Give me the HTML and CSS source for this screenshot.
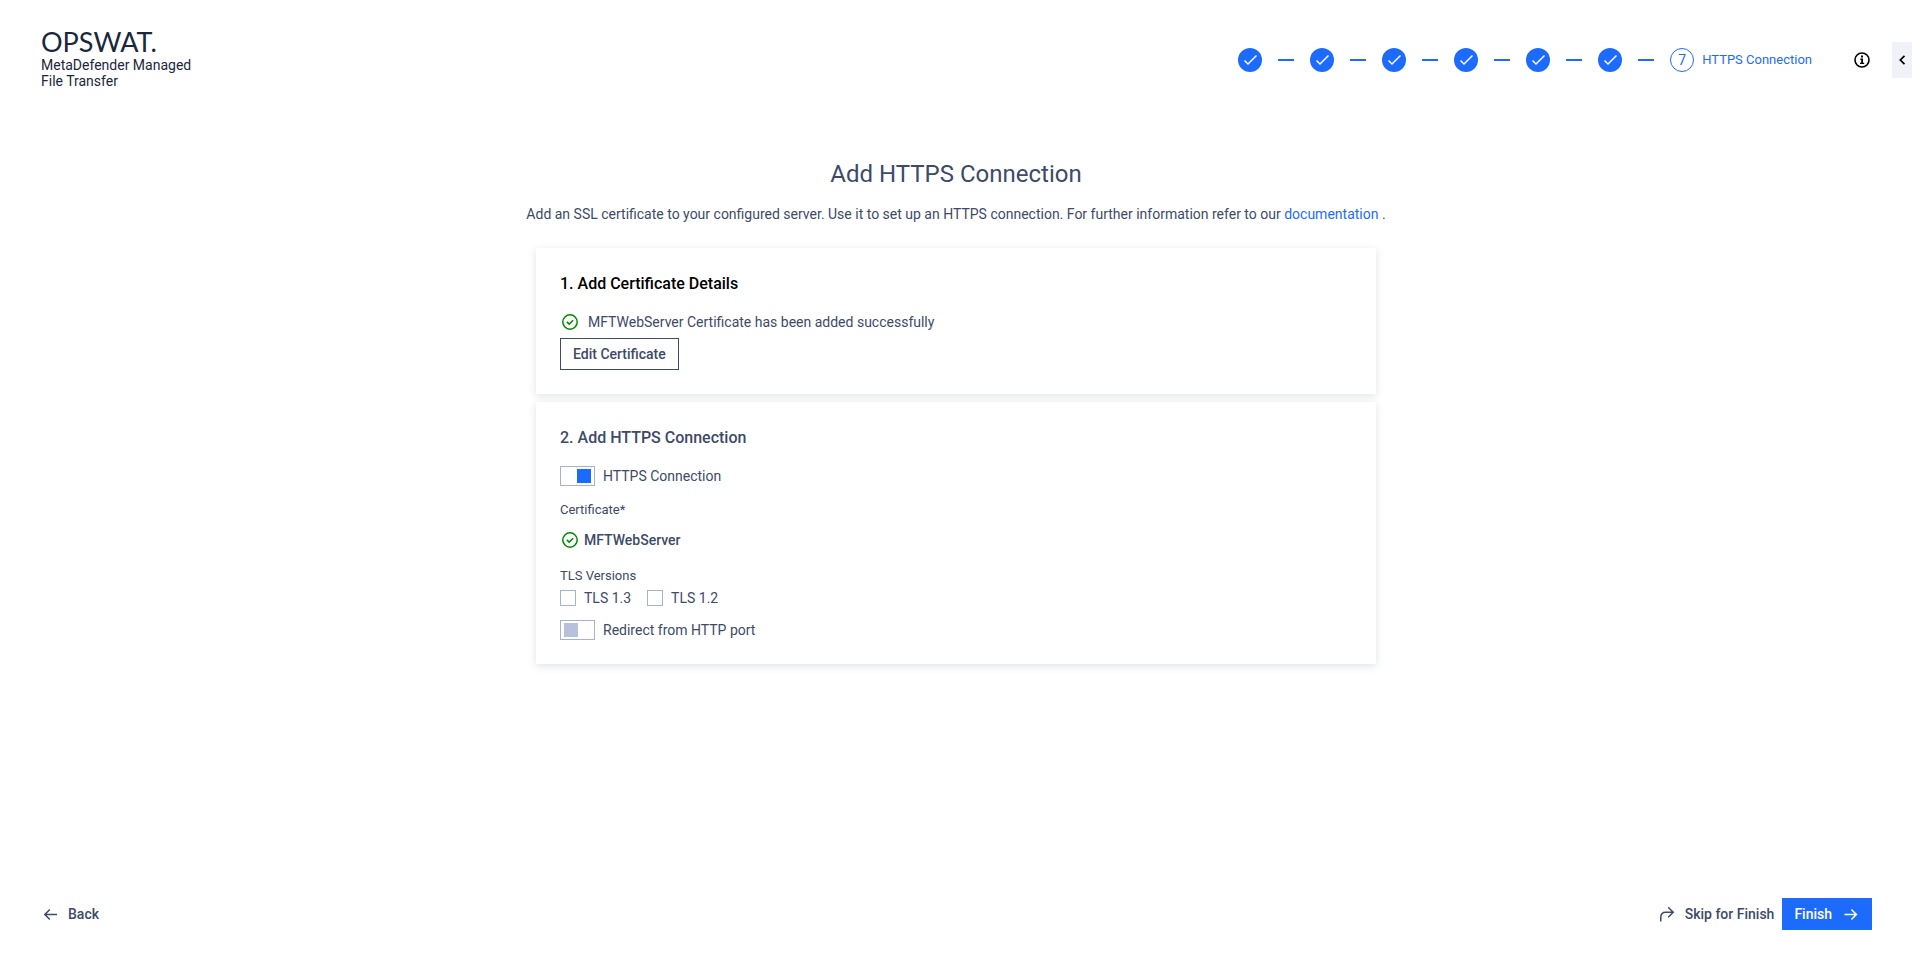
FILE: index.html
```html
<!DOCTYPE html>
<html lang="en">
<head>
  <meta charset="UTF-8">
  <title>Add HTTPS Connection</title>
  <meta name="viewport" content="width=device-width, initial-scale=1">
  <link rel="stylesheet" href="styles.css">
</head>
<body>
  <!-- shared icons -->
  <svg class="sprite" aria-hidden="true">
    <symbol id="icon-check" viewBox="0 0 24 24">
      <path d="M6.5 12.5l3.5 3.5 8.5-8.5" fill="none" stroke="currentColor" stroke-width="1.5"/>
    </symbol>
    <symbol id="icon-success" viewBox="0 0 16 16">
      <circle cx="8" cy="8" r="7.2" fill="none" stroke="currentColor" stroke-width="1.5"/>
      <path d="M4.8 7.9l2.4 2.2 4-3.9" fill="none" stroke="currentColor" stroke-width="1.5"/>
    </symbol>
  </svg>

  <header class="header">
    <div class="brand">
      <div class="logo">OPSWAT.</div>
      <div class="product">MetaDefender Managed<br>File Transfer</div>
    </div>
    <ol class="stepper">
      <li class="step done"><svg><use href="#icon-check"/></svg></li>
      <li class="step done"><svg><use href="#icon-check"/></svg></li>
      <li class="step done"><svg><use href="#icon-check"/></svg></li>
      <li class="step done"><svg><use href="#icon-check"/></svg></li>
      <li class="step done"><svg><use href="#icon-check"/></svg></li>
      <li class="step done"><svg><use href="#icon-check"/></svg></li>
      <li class="step current"><span class="number">7</span>HTTPS Connection</li>
    </ol>
    <button class="info-btn" type="button" aria-label="Information">
      <svg viewBox="0 0 16 16">
        <circle cx="8" cy="8" r="7" fill="none" stroke="currentColor" stroke-width="1.6"/>
        <path d="M7 3.6h2v1.8H7zM6.2 6.6H9v4.2h1.2V12H6v-1.2h1.2V7.8h-1z" fill="currentColor"/>
      </svg>
    </button>
    <button class="panel-btn" type="button" aria-label="Open panel">
      <svg viewBox="0 0 12 12"><path d="M8.5 1.8L4.3 6l4.2 4.2" fill="none" stroke="currentColor" stroke-width="1.7"/></svg>
    </button>
  </header>

  <main class="content">
    <h1>Add HTTPS Connection</h1>
    <p class="intro">Add an SSL certificate to your configured server. Use it to set up an HTTPS connection. For further information refer to our <a href="#">documentation</a> .</p>

    <section class="card card-details">
      <h2>1. Add Certificate Details</h2>
      <div class="status message">
        <svg class="success"><use href="#icon-success"/></svg>
        <span>MFTWebServer Certificate has been added successfully</span>
      </div>
      <button class="btn btn-outline" type="button">Edit Certificate</button>
    </section>

    <section class="card">
      <h2>2. Add HTTPS Connection</h2>
      <label class="option"><input class="toggle" type="checkbox" checked>HTTPS Connection</label>
      <div class="field-label certificate-label">Certificate*</div>
      <div class="status certificate">
        <svg class="success"><use href="#icon-success"/></svg>
        <strong>MFTWebServer</strong>
      </div>
      <div class="field-label">TLS Versions</div>
      <div class="versions">
        <label class="option"><input class="checkbox" type="checkbox">TLS 1.3</label>
        <label class="option"><input class="checkbox" type="checkbox">TLS 1.2</label>
      </div>
      <label class="option"><input class="toggle" type="checkbox">Redirect from HTTP port</label>
    </section>
  </main>

  <footer class="footer">
    <button class="btn btn-text btn-back" type="button">
      <svg viewBox="0 0 16 16"><path d="M15 8.5H3M7.8 3.5l-5 5 5 5" fill="none" stroke="currentColor" stroke-width="1.5"/></svg>
      Back
    </button>
    <button class="btn btn-text" type="button">
      <svg viewBox="0 0 16 16"><path d="M1.8 15.5v-4.2q0-5 5-5H14M9.2 1.2l5 5-5 5" fill="none" stroke="currentColor" stroke-width="1.5"/></svg>
      Skip for Finish
    </button>
    <button class="btn btn-primary" type="button">
      Finish
      <svg viewBox="0 0 16 16"><path d="M0.5 8.5h12M7.4 3.5l5 5-5 5" fill="none" stroke="currentColor" stroke-width="1.5"/></svg>
    </button>
  </footer>
</body>
</html>
```
FILE: styles.css
```css
:root {
  --primary: #1d6bfc;
  --text: #3d4a69;
  --dark: #1b273c;
  --border: #a4b3d5;
  --muted: #b7c1dc;
  --success: #008a00;
}
* { box-sizing: border-box; }
body {
  margin: 0;
  min-height: 100vh;
  display: flex;
  flex-direction: column;
  background: #fff;
  color: var(--text);
  font: 14px/20px Roboto, Arial, sans-serif;
}
button, input { font: inherit; color: inherit; margin: 0; }
button { cursor: pointer; }
svg { width: 16px; height: 16px; flex: none; display: block; }
.sprite { display: none; }
a { color: var(--primary); text-decoration: none; }

/* Header */
.header {
  display: flex;
  align-items: center;
  height: 120px;
  padding-left: 41px;
}
.brand { color: var(--dark); }
.logo {
  margin-bottom: 4px;
  font: 400 27px/22px Lato, sans-serif;
}
.product { line-height: 16px; }
.stepper {
  display: flex;
  align-items: center;
  gap: 16px;
  list-style: none;
  margin: 0 42px 0 auto;
  padding: 0;
}
.step { display: flex; align-items: center; }
.done { gap: 16px; color: #fff; }
.done svg {
  width: 24px;
  height: 24px;
  border-radius: 50%;
  background: var(--primary);
}
.done::after {
  content: "";
  width: 16px;
  height: 2px;
  background: var(--primary);
}
.current {
  gap: 8px;
  color: var(--primary);
  font-size: 13px;
}
.number {
  width: 24px;
  height: 24px;
  border: 1px solid var(--primary);
  border-radius: 50%;
  font-size: 14px;
  line-height: 22px;
  text-align: center;
}
.info-btn, .panel-btn {
  display: flex;
  align-items: center;
  justify-content: center;
  border: 0;
  padding: 0;
  background: none;
  color: #000;
}
.info-btn { margin-right: 22px; }
.panel-btn { width: 20px; height: 36px; background: #f0f2f8; }
.panel-btn svg { width: 12px; height: 12px; }

/* Content */
.content {
  flex: 1;
  padding: 38px 40px;
}
h1 {
  margin: 0 0 14px;
  font-size: 24px;
  line-height: 32px;
  font-weight: 400;
  text-align: center;
}
.intro { margin: 0 0 24px; text-align: center; }
.card {
  max-width: 840px;
  margin: 0 auto 8px;
  padding: 24px;
  background: #fff;
  box-shadow: 0 2px 8px rgba(61, 74, 105, 0.16);
}
h2 {
  margin: 0 0 16px;
  font-size: 16px;
  line-height: 24px;
  font-weight: 500;
}
.card-details h2 { color: #000; }
.status {
  display: flex;
  align-items: center;
  gap: 6px;
  padding-left: 2px;
}
.success { color: var(--success); }
.message { gap: 10px; margin-bottom: 6px; }
.certificate { margin: 10px 0 16px; }
strong { font-weight: 500; }
.field-label { font-size: 13px; }
.certificate-label { margin-top: 14px; }
.option {
  display: flex;
  align-items: center;
  gap: 8px;
  width: fit-content;
}
.versions {
  display: flex;
  gap: 16px;
  margin: 2px 0 12px;
}
.toggle, .checkbox {
  appearance: none;
  border: 1px solid var(--border);
  background: #fff;
}
.checkbox { width: 16px; height: 16px; }
.checkbox:checked { background: var(--primary); }
.toggle {
  display: flex;
  align-items: center;
  width: 35px;
  height: 20px;
  padding: 0 3px;
}
.toggle::before {
  content: "";
  width: 14px;
  height: 14px;
  background: var(--muted);
}
.toggle:checked { justify-content: flex-end; }
.toggle:checked::before { background: var(--primary); }

/* Buttons */
.btn {
  display: flex;
  align-items: center;
  height: 32px;
  padding: 0 12px 1px;
  border: 1px solid transparent;
  background: none;
  font-weight: 500;
}
.btn-outline { border-color: var(--text); background: #fff; }
.btn-primary { gap: 12px; padding: 0 11px 1px; background: var(--primary); color: #fff; }
.btn-text { gap: 10px; padding: 0 7px 1px; }
.footer {
  display: flex;
  align-items: center;
  padding: 0 40px 32px;
}
.btn-back { padding: 0 1px 1px; margin-right: auto; }
```
